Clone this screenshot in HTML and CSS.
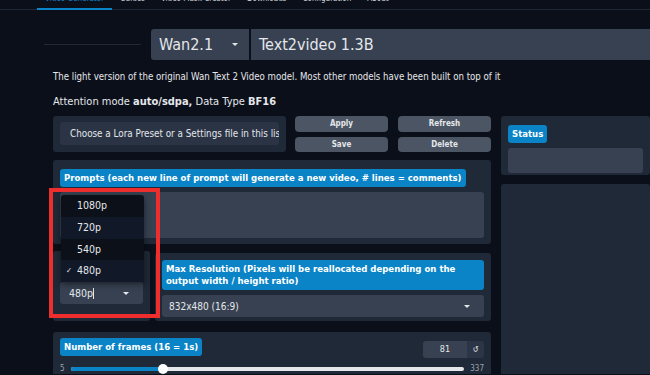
FILE: index.html
```html
<!DOCTYPE html>
<html lang="en">
<head>
    <meta charset="UTF-8">
    <title>Wan2GP - Video Generator</title>
    <link rel="stylesheet" href="styles.css">
</head>
<body>
    <!-- Tabs -->
    <nav class="tabs">
        <a href="#" class="tab active">Video Generator</a>
        <a href="#" class="tab">Guides</a>
        <a href="#" class="tab">Video Mask Creator</a>
        <a href="#" class="tab">Downloads</a>
        <a href="#" class="tab">Configuration</a>
        <a href="#" class="tab">About</a>
    </nav>

    <!-- Model choice -->
    <div class="model-row">
        <div class="spacer"><div class="spacer-line"></div></div>
        <div class="model-family">
            <span>Wan2.1</span>
            <span class="caret"></span>
        </div>
        <div class="model-name">Text2video 1.3B</div>
    </div>

    <p class="model-desc">The light version of the original Wan Text 2 Video model. Most other models have been built on top of it</p>
    <p class="model-info">Attention mode <b>auto/sdpa,</b> Data Type <b>BF16</b></p>

    <div class="main">
        <!-- Left column -->
        <div class="left-col">
            <div class="lora-row">
                <div class="panel lora-panel">
                    <div class="lora-input">Choose a Lora Preset or a Settings file in this list</div>
                </div>
                <div class="lora-buttons">
                    <button class="btn">Apply</button>
                    <button class="btn">Refresh</button>
                    <button class="btn">Save</button>
                    <button class="btn">Delete</button>
                </div>
            </div>

            <div class="panel prompts-panel">
                <span class="label">Prompts (each new line of prompt will generate a new video, # lines = comments)</span>
                <div class="textarea"></div>
            </div>

            <div class="res-row">
                <div class="panel res-panel">
                    <div class="res-select">
                        <span>480p<span class="text-cursor"></span></span>
                        <span class="caret"></span>
                    </div>

                    <!-- open dropdown -->
                    <ul class="res-options">
                        <li>1080p</li>
                        <li class="alt">720p</li>
                        <li>540p</li>
                        <li class="alt selected">480p</li>
                    </ul>
                    <div class="highlight-box"></div>
                </div>
                <div class="panel maxres-panel">
                    <span class="label">Max Resolution (Pixels will be reallocated depending on the output width / height ratio)</span>
                    <div class="select">
                        <span>832x480 (16:9)</span>
                        <span class="caret"></span>
                    </div>
                </div>
            </div>

            <div class="panel frames-panel">
                <div class="frames-head">
                    <span class="label">Number of frames (16 = 1s)</span>
                    <div class="number-box">
                        <span class="number-value">81</span>
                        <span class="reset">&#8634;</span>
                    </div>
                </div>
                <div class="slider">
                    <span class="slider-min">5</span>
                    <div class="track">
                        <div class="track-fill" style="width: 23.5%"></div>
                        <div class="thumb" style="left: 23.5%"></div>
                    </div>
                    <span class="slider-max">337</span>
                </div>
            </div>
        </div>

        <!-- Right column -->
        <div class="right-col">
            <div class="panel status-panel">
                <span class="label">Status</span>
                <div class="status-box"></div>
            </div>
            <div class="panel output-panel"></div>
        </div>
    </div>
</body>
</html>
```

FILE: styles.css
```css
:root {
    --bg: #0b0f19;
    --panel: #1f2937;
    --input: #374151;
    --input-dim: #2a3444;
    --button: #4b5563;
    --accent: #0a84c7;
    --text: #e5e7eb;
    --text-dim: #cbd0d8;
}

body {
    margin: 0;
    height: 375px;
    background-color: var(--bg);
    color: var(--text);
    font-family: "DejaVu Sans Condensed", "DejaVu Sans", Verdana, sans-serif;
    overflow: hidden;
}

/* Tabs */
.tabs {
    display: flex;
    margin-top: -9px;
    padding-left: 37px;
    border-bottom: 1px solid var(--panel);
}

.tab {
    padding: 2px 8px 3px;
    font-size: 8px;
    line-height: 12px;
    color: var(--text-dim);
    text-decoration: none;
    border-bottom: 2px solid transparent;
    margin-bottom: -1px;
}

.tab.active {
    color: var(--accent);
    border-bottom-color: var(--accent);
}

/* Model row */
.model-row {
    display: flex;
    gap: 10px;
    margin-top: 19px;
    padding-left: 44px;
    height: 31px;
}

.spacer {
    width: 97px;
    display: flex;
    align-items: center;
}

.spacer-line {
    width: 100%;
    border-top: 1px solid var(--panel);
}

.model-family,
.model-name {
    background-color: var(--input);
    display: flex;
    align-items: center;
    font-size: 16px;
    color: var(--text);
}

.model-family {
    width: 98px;
    padding: 0 11px 0 8px;
    box-sizing: border-box;
    justify-content: space-between;
    border-radius: 3px 0 0 3px;
}

.model-name {
    flex: 1;
    margin-left: -9px;
    border-left: 1px solid var(--bg);
    padding-left: 8px;
}

.caret {
    width: 0;
    height: 0;
    border-left: 3px solid transparent;
    border-right: 3px solid transparent;
    border-top: 3px solid var(--text);
}

.model-desc {
    margin: 11px 0 0 53px;
    font-size: 9.6px;
    color: var(--text);
    white-space: nowrap;
}

.model-info {
    margin: 13px 0 0 53px;
    font-size: 11px;
    color: var(--text);
}

/* Main layout */
.main {
    display: flex;
    gap: 10px;
    padding-left: 53px;
    margin-top: 8px;
}

.left-col {
    width: 438px;
    display: flex;
    flex-direction: column;
    gap: 8px;
}

.right-col {
    flex: 1;
    display: flex;
    flex-direction: column;
    gap: 9px;
}

.panel {
    background-color: var(--panel);
    border-radius: 3px;
    padding: 6px 7px;
    box-sizing: border-box;
}

.label {
    display: inline-block;
    background-color: var(--accent);
    color: #ffffff;
    font-size: 9.5px;
    font-weight: bold;
    padding: 3px 4px;
    border-radius: 3px;
    line-height: 12px;
}

/* Lora row */
.lora-row {
    display: flex;
    gap: 9px;
    height: 36px;
}

.lora-panel {
    width: 233px;
}

.lora-input {
    background-color: var(--input-dim);
    height: 23px;
    border-radius: 3px;
    font-size: 9.8px;
    line-height: 23px;
    padding-left: 10px;
    white-space: nowrap;
    overflow: hidden;
}

.lora-buttons {
    flex: 1;
    display: grid;
    grid-template-columns: 1fr 1fr;
    gap: 5px 10px;
}

.btn {
    background-color: var(--button);
    border: none;
    border-radius: 4px;
    color: var(--text);
    font-family: inherit;
    font-size: 8px;
    font-weight: bold;
    padding: 0;
}

/* Prompts */
.prompts-panel {
    height: 84px;
}

.textarea {
    margin-top: 5px;
    height: 46px;
    background-color: var(--input);
    border-radius: 3px;
}

/* Resolution */
.res-row {
    display: flex;
    gap: 5px;
    height: 70px;
    margin-top: -1px;
}

.res-panel {
    width: 97px;
    position: relative;
    display: flex;
    align-items: flex-end;
    padding-bottom: 17px;
}

.res-select {
    width: 83px;
    height: 22px;
    background-color: var(--input);
    border-radius: 3px;
    display: flex;
    align-items: center;
    justify-content: space-between;
    padding: 0 14px 0 9px;
    box-sizing: border-box;
    font-size: 10.5px;
}

.text-cursor {
    display: inline-block;
    width: 1px;
    height: 11px;
    background-color: var(--text);
    vertical-align: -2px;
}

.res-options {
    position: absolute;
    left: 8px;
    bottom: 39px;
    width: 83px;
    margin: 0;
    padding: 0;
    list-style: none;
    background-color: #0c1019;
    border-radius: 3px 3px 0 0;
    box-shadow: 0 2px 6px rgba(0, 0, 0, 0.5);
}

.res-options li {
    height: 21.7px;
    line-height: 21.7px;
    padding-left: 16px;
    font-size: 10.5px;
    color: var(--text);
    position: relative;
}

.res-options li.alt {
    background-color: #111827;
}

.res-options li.selected::before {
    content: "\2713";
    position: absolute;
    left: 5px;
    font-size: 8px;
}

.highlight-box {
    position: absolute;
    left: -4px;
    top: -63px;
    width: 103px;
    height: 122px;
    border: 4px solid #ee2d2d;
}

.maxres-panel {
    flex: 1;
    margin-top: 2px;
    padding-top: 7px;
}

.maxres-panel .label {
    display: block;
}

.select {
    margin-top: 5px;
    height: 22px;
    background-color: var(--input);
    border-radius: 3px;
    display: flex;
    align-items: center;
    justify-content: space-between;
    padding: 0 14px 0 7px;
    font-size: 10px;
}

/* Frames */
.frames-panel {
    height: 42px;
    margin-top: 3px;
    border-radius: 3px 3px 0 0;
    overflow: hidden;
}

.frames-head {
    display: flex;
    justify-content: space-between;
    align-items: flex-start;
}

.number-box {
    display: flex;
    margin-top: 3px;
    height: 17px;
    border-radius: 3px;
    overflow: hidden;
}

.number-value {
    width: 44px;
    background-color: var(--input);
    text-align: center;
    font-size: 9px;
    line-height: 17px;
}

.reset {
    width: 17px;
    background-color: #2b3545;
    text-align: center;
    font-size: 8px;
    line-height: 17px;
}

.slider {
    display: flex;
    align-items: center;
    gap: 6px;
    margin-top: 6px;
    font-size: 8px;
    line-height: 10px;
    color: #9ca3af;
}

.track {
    flex: 1;
    height: 4px;
    background-color: var(--text);
    border-radius: 2px;
    position: relative;
}

.track-fill {
    height: 100%;
    background-color: var(--accent);
    border-radius: 2px;
}

.thumb {
    position: absolute;
    top: -3px;
    width: 10px;
    height: 10px;
    margin-left: -5px;
    border-radius: 50%;
    background-color: #ffffff;
}

/* Right column */
.status-panel {
    height: 59px;
    padding: 6px 7px;
}

.status-box {
    margin-top: 5px;
    height: 25px;
    background-color: var(--input);
    border-radius: 3px;
}

.output-panel {
    height: 190px;
    border-radius: 3px 3px 0 0;
}
```
